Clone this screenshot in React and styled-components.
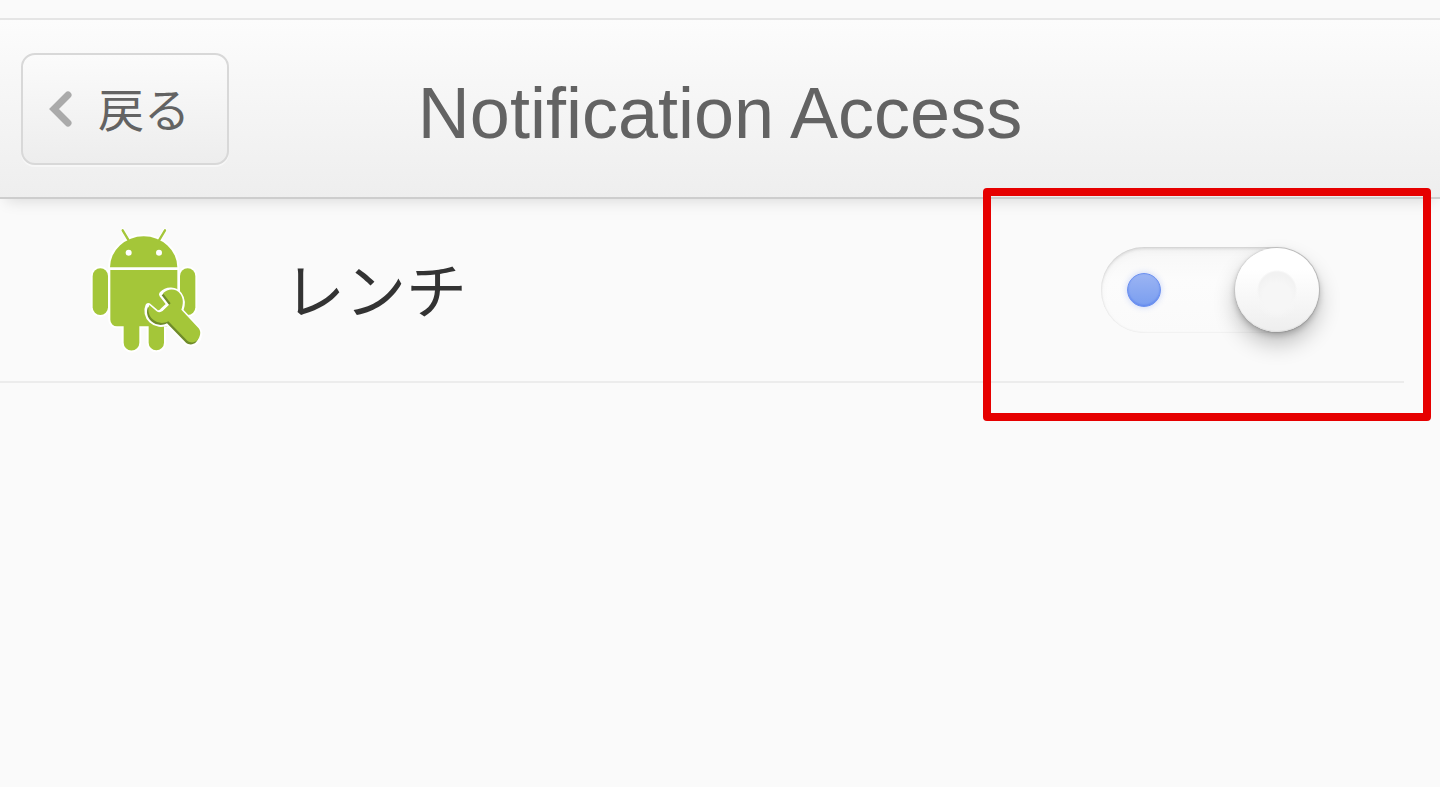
import React, { useState } from "react";
import styled, { createGlobalStyle } from "styled-components";

const GlobalStyle = createGlobalStyle`
  *, *::before, *::after { box-sizing: border-box; }
  body {
    margin: 0;
    background: #fafafa;
    color: #333;
    font-family: "Liberation Sans", "Noto Sans CJK JP", sans-serif;
  }
`;

const Page = styled.div`
  min-height: 100vh;
  padding-top: 18px;
  overflow: hidden;
`;

const Header = styled.header`
  display: grid;
  grid-template-columns: 1fr auto 1fr;
  align-items: center;
  padding: 33px 21px 32px;
  border-top: 2px solid #e5e5e5;
  border-bottom: 2px solid #cdcdcd;
  background: linear-gradient(#fcfcfc, #eeeeee);
  box-shadow: 0 8px 14px -6px rgba(0, 0, 0, 0.13);
`;

const BackButton = styled.button`
  display: flex;
  align-items: center;
  justify-self: start;
  gap: 26px;
  width: 208px;
  height: 112px;
  padding: 0 0 0 26px;
  border: 2px solid #d8d8d8;
  border-radius: 14px;
  background: linear-gradient(#fbfbfb, #ededed);
  box-shadow: 0 2px 0 #f7f7f7;
  color: #636363;
  font-family: "Noto Sans CJK JP", sans-serif;
  font-size: 46px;
  font-weight: 400;
  line-height: 64px;
  cursor: pointer;
`;

const BackText = styled.span`
  padding-bottom: 4px;
`;

const Title = styled.h1`
  margin: 0;
  color: #636363;
  font-size: 72px;
  font-weight: 400;
  line-height: 80px;
  padding-top: 8px;
  white-space: nowrap;
`;

const List = styled.ul`
  margin: 0;
  padding: 0;
  list-style: none;
`;

const Row = styled.li`
  position: relative;
  display: flex;
  align-items: center;
  margin-right: 36px;
  padding: 16px 84px 16px 70px;
  border-bottom: 2px solid #ececec;
`;

const RowLabel = styled.label`
  flex: 1;
  margin-left: 64px;
  padding-bottom: 4px;
  font-family: "Noto Sans CJK JP", sans-serif;
  font-size: 61px;
  line-height: 80px;
`;

const Toggle = styled.input`
  appearance: none;
  position: relative;
  flex: none;
  width: 219px;
  height: 86px;
  margin: 0;
  border-radius: 43px;
  background: linear-gradient(#f7f7f7, #fcfcfc 40%, #fafafa);
  box-shadow: inset 0 2px 3px rgba(0, 0, 0, 0.1), inset 0 0 2px rgba(0, 0, 0, 0.1),
    inset 0 4px 10px rgba(0, 0, 0, 0.03);
  cursor: pointer;

  &::before {
    content: "";
    position: absolute;
    top: 26px;
    left: 26px;
    width: 34px;
    height: 34px;
    border: 1px solid #6b90f0;
    border-radius: 50%;
    background: linear-gradient(#9bb4f3, #7a9ef0);
    box-shadow: inset 0 -1px 2px #5f86ee, 0 0 6px rgba(80, 120, 240, 0.3);
    opacity: 0;
  }

  &::after {
    content: "";
    position: absolute;
    top: 1px;
    left: 1px;
    width: 84px;
    height: 84px;
    border-radius: 50%;
    background:
      radial-gradient(circle at 50% 58%, #f6f6f6 0 14px, transparent 22px),
      radial-gradient(circle, #f2f2f2 0 18px, transparent 20px),
      linear-gradient(#ffffff 25%, #eeeeee);
    box-shadow: inset 0 -1px 1px rgba(0, 0, 0, 0.06), 0 0 2px rgba(0, 0, 0, 0.22),
      0 3px 6px rgba(0, 0, 0, 0.22), 0 12px 22px rgba(0, 0, 0, 0.24);
  }

  &:checked::before { opacity: 1; }
  &:checked::after { left: auto; right: 1px; }
`;

const Highlight = styled.div`
  position: absolute;
  top: -11px;
  right: -27px;
  width: 448px;
  height: 233px;
  border: 8px solid #e60000;
  border-radius: 4px;
  pointer-events: none;
`;

const WRENCH =
  "M276 238 C291 222 316 223 328 240 C338 254 337 271 331 287 L383 343 C392 354 387 370 379 379 C370 387 357 387 349 380 L292 322 C277 330 258 328 245 316 C232 304 229 286 235 273 L257 292 C264 297 272 294 278 288 L299 268 Z";

const ChevronIcon = () => (
  <svg width="23" height="36" viewBox="0 0 23 36" aria-hidden="true">
    <path d="M19 4 L5 18 L19 32" fill="none" stroke="#aaa" strokeWidth="7" strokeLinecap="round" />
  </svg>
);

const AppIcon = () => (
  <svg width="150" height="150" viewBox="0 0 450 450" aria-hidden="true">
    <g stroke="#fff" strokeWidth="12" strokeLinejoin="round" strokeLinecap="round" fill="#fff">
      <path d="M120 157 A101 93 0 0 1 322 157 Z" />
      <path d="M121 165 H322 V334 H282 V383 A23 23 0 0 1 236 383 V334 H208 V383 A23 23 0 0 1 161 383 V334 H141 A20 20 0 0 1 121 314 Z" />
      <rect x="68" y="160" width="46" height="140" rx="23" />
      <rect x="330" y="160" width="46" height="140" rx="23" />
      <path d="M158 46 L176 76 M285 46 L267 76" />
    </g>
    <g fill="#a4c639">
      <path d="M120 157 A101 93 0 0 1 322 157 Z" />
      <path d="M121 165 H322 V314 A20 20 0 0 1 302 334 H282 V383 A23 23 0 0 1 236 383 V334 H208 V383 A23 23 0 0 1 161 383 V334 H141 A20 20 0 0 1 121 314 Z" />
      <rect x="68" y="160" width="46" height="140" rx="23" />
      <rect x="330" y="160" width="46" height="140" rx="23" />
      <path d="M158 46 L176 76 M285 46 L267 76" stroke="#a4c639" strokeWidth="7" strokeLinecap="round" />
    </g>
    <circle cx="176" cy="113" r="9" fill="#fff" />
    <circle cx="267" cy="113" r="9" fill="#fff" />
    <path d={WRENCH} fill="#fff" stroke="#fff" strokeWidth="18" strokeLinejoin="round" />
    <path d={WRENCH} transform="translate(-1 3)" fill="#6f8b2a" />
    <path d={WRENCH} transform="translate(3 -3)" fill="#a4c639" />
  </svg>
);

export default function App() {
  const [enabled, setEnabled] = useState(true);

  return (
    <Page>
      <GlobalStyle />
      <Header>
        <BackButton type="button">
          <ChevronIcon />
          <BackText>戻る</BackText>
        </BackButton>
        <Title>Notification Access</Title>
      </Header>
      <List>
        <Row>
          <AppIcon />
          <RowLabel htmlFor="wrench-access">レンチ</RowLabel>
          <Toggle
            id="wrench-access"
            type="checkbox"
            checked={enabled}
            onChange={(event) => setEnabled(event.target.checked)}
          />
          <Highlight />
        </Row>
      </List>
    </Page>
  );
}
